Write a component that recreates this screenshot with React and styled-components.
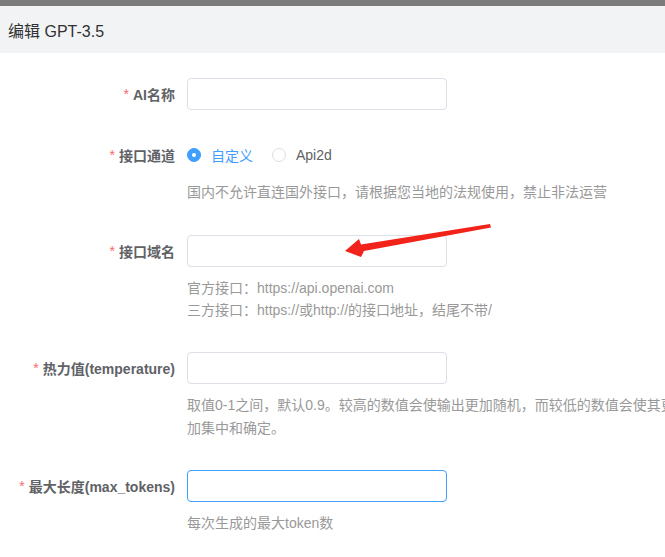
import React from "react";
import styled, { createGlobalStyle } from "styled-components";

const GlobalStyle = createGlobalStyle`
  html, body {
    margin: 0;
    padding: 0;
    background: #fff;
    overflow: hidden;
  }
  body {
    font-family: "Liberation Sans", "Noto Sans CJK SC", sans-serif;
  }
`;

const Page = styled.div`
  position: relative;
  width: 665px;
  height: 557px;
  overflow: hidden;
`;

const TopBar = styled.div`
  height: 6px;
  background: #7b7b7b;
`;

const Header = styled.div`
  height: 47px;
  display: flex;
  align-items: center;
  padding-left: 8px;
  background: #f2f3f5;
  font-size: 16px;
  color: #303133;
`;

const Form = styled.div`
  padding-top: 25px;
  width: 900px;
`;

const Item = styled.div`
  display: flex;
  align-items: flex-start;
  margin-bottom: ${(p) => p.$gap || 30}px;
`;

const Label = styled.label`
  width: 187px;
  box-sizing: border-box;
  padding-right: 12px;
  height: 32px;
  display: flex;
  align-items: center;
  justify-content: flex-end;
  font-size: 14px;
  font-weight: bold;
  color: #606266;
  white-space: nowrap;
`;

const Star = styled.span`
  color: #f56c6c;
  font-weight: normal;
  margin-right: 4px;
`;

const Content = styled.div`
  display: flex;
  flex-direction: column;
`;

const Input = styled.input`
  width: 260px;
  height: 32px;
  box-sizing: border-box;
  border: 1px solid ${(p) => (p.$focused ? "#409eff" : "#dcdfe6")};
  border-radius: 4px;
  outline: none;
  padding: 0 12px;
  font-size: 14px;
  font-family: inherit;
`;

const Hint = styled.div`
  margin-top: 10px;
  font-size: 14px;
  line-height: ${(p) => p.$lh || 22}px;
  color: #999;
  white-space: pre-line;
`;

const RadioGroup = styled.div`
  height: 32px;
  display: flex;
  align-items: center;
`;

const Radio = styled.div`
  display: flex;
  align-items: center;
  margin-right: 19px;
  font-size: 14px;
  color: ${(p) => (p.$checked ? "#409eff" : "#606266")};
`;

const Dot = styled.span`
  width: 14px;
  height: 14px;
  box-sizing: border-box;
  border-radius: 50%;
  border: 1px solid ${(p) => (p.$checked ? "#409eff" : "#dcdfe6")};
  background: ${(p) => (p.$checked ? "#409eff" : "#fff")};
  display: flex;
  align-items: center;
  justify-content: center;
  margin-right: 10px;

  &::after {
    content: "";
    width: 4px;
    height: 4px;
    border-radius: 50%;
    background: #fff;
    display: ${(p) => (p.$checked ? "block" : "none")};
  }
`;

const Arrow = styled.svg`
  position: absolute;
  left: 0;
  top: 0;
  pointer-events: none;
`;

function Field({ label, children, gap }) {
  return (
    <Item $gap={gap}>
      <Label>
        <Star>*</Star>
        {label}
      </Label>
      <Content>{children}</Content>
    </Item>
  );
}

export default function App() {
  return (
    <Page>
      <GlobalStyle />
      <TopBar />
      <Header>编辑 GPT-3.5</Header>
      <Form>
        <Field label="AI名称" gap={29}>
          <Input />
        </Field>
        <Field label="接口通道" gap={32}>
          <RadioGroup>
            <Radio $checked>
              <Dot $checked />
              自定义
            </Radio>
            <Radio>
              <Dot />
              Api2d
            </Radio>
          </RadioGroup>
          <Hint>国内不允许直连国外接口，请根据您当地的法规使用，禁止非法运营</Hint>
        </Field>
        <Field label="接口域名" gap={31}>
          <Input />
          <Hint>
            {"官方接口：https://api.openai.com\n三方接口：https://或http://的接口地址，结尾不带/"}
          </Hint>
        </Field>
        <Field label="热力值(temperature)" gap={30}>
          <Input />
          <Hint $lh={23}>
            {"取值0-1之间，默认0.9。较高的数值会使输出更加随机，而较低的数值会使其更\n加集中和确定。"}
          </Hint>
        </Field>
        <Field label="最大长度(max_tokens)">
          <Input $focused />
          <Hint>每次生成的最大token数</Hint>
        </Field>
      </Form>
      <Arrow width="665" height="557">
        <polygon
          points="345,251 359,239 361,244.5 490,224 491,227.5 364,251 361,257"
          fill="#f2231b"
        />
      </Arrow>
    </Page>
  );
}
